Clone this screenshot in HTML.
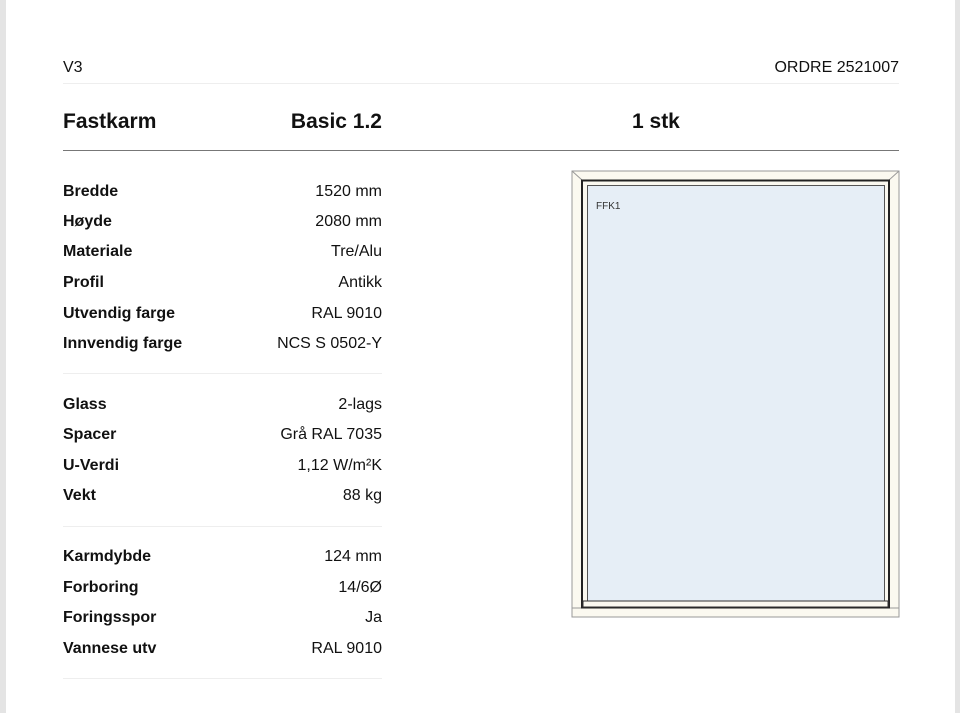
<!DOCTYPE html>
<html><head><style>
body{margin:0;width:960px;height:713px;background:#fff;position:relative;overflow:hidden;font-family:"Liberation Sans",Arial,sans-serif;color:#111}
.bl{position:absolute;left:0;top:0;width:6px;height:713px;background:#e4e4e4}
.br{position:absolute;right:0;top:0;width:5px;height:713px;background:#e4e4e4}
.t{position:absolute;white-space:nowrap}
.hr{position:absolute;left:63px;height:1px;background:#eee}
.lab{position:absolute;left:63px;font-weight:bold;font-size:16px;transform:translateY(-50%);margin-top:2px}
.val{position:absolute;right:578px;font-size:16px;transform:translateY(-50%);margin-top:2px}
</style></head><body>
<div class="bl"></div><div class="br"></div>
<div class="t" style="left:63px;top:59px;font-size:16px">V3</div>
<div class="t" style="right:61px;top:59px;font-size:16px">ORDRE 2521007</div>
<div class="hr" style="top:83px;width:836px"></div>
<div class="t" style="left:63px;top:110px;font-size:21px;font-weight:bold">Fastkarm</div>
<div class="t" style="right:578px;top:110px;font-size:21px;font-weight:bold">Basic 1.2</div>
<div class="t" style="left:632px;top:110px;font-size:21px;font-weight:bold">1 stk</div>
<div style="position:absolute;left:63px;top:150px;width:836px;height:1px;background:#777"></div>

<div class="lab" style="top:190px">Bredde</div><div class="val" style="top:190px">1520 mm</div>
<div class="lab" style="top:220px">Høyde</div><div class="val" style="top:220px">2080 mm</div>
<div class="lab" style="top:250px">Materiale</div><div class="val" style="top:250px">Tre/Alu</div>
<div class="lab" style="top:281px">Profil</div><div class="val" style="top:281px">Antikk</div>
<div class="lab" style="top:312px">Utvendig farge</div><div class="val" style="top:312px">RAL 9010</div>
<div class="lab" style="top:342px">Innvendig farge</div><div class="val" style="top:342px">NCS S 0502-Y</div>
<div class="hr" style="top:373px;width:319px"></div>
<div class="lab" style="top:403px">Glass</div><div class="val" style="top:403px">2-lags</div>
<div class="lab" style="top:433px">Spacer</div><div class="val" style="top:433px">Grå RAL 7035</div>
<div class="lab" style="top:464px">U-Verdi</div><div class="val" style="top:464px">1,12 W/m²K</div>
<div class="lab" style="top:494px">Vekt</div><div class="val" style="top:494px">88 kg</div>
<div class="hr" style="top:526px;width:319px"></div>
<div class="lab" style="top:555px">Karmdybde</div><div class="val" style="top:555px">124 mm</div>
<div class="lab" style="top:586px">Forboring</div><div class="val" style="top:586px">14/6Ø</div>
<div class="lab" style="top:616px">Foringsspor</div><div class="val" style="top:616px">Ja</div>
<div class="lab" style="top:647px">Vannese utv</div><div class="val" style="top:647px">RAL 9010</div>
<div class="hr" style="top:678px;width:319px"></div>

<svg style="position:absolute;left:0;top:0" width="960" height="713">
<polygon points="572,171 899,171 899,617 572,617" fill="#fbf9f0" stroke="#999" stroke-width="1"/>
<line x1="572" y1="171" x2="582" y2="180" stroke="#999"/>
<line x1="899" y1="171" x2="889" y2="180" stroke="#999"/>
<line x1="572" y1="608" x2="899" y2="608" stroke="#999"/>
<rect x="582" y="180.5" width="307" height="427" fill="#fbf9f0" stroke="#222" stroke-width="2"/>
<rect x="587.5" y="185.5" width="297" height="416" fill="#e6eef6" stroke="#555" stroke-width="1"/>
<rect x="583" y="601" width="305" height="6" fill="#fbf9f0" stroke="#333" stroke-width="1"/>
<text x="596" y="209" font-family="Liberation Sans,sans-serif" font-size="10" fill="#333">FFK1</text>
</svg>
</body></html>
